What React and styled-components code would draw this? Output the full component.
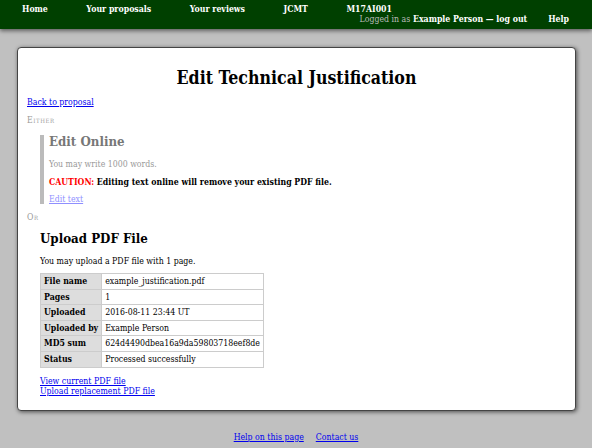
import styled, { createGlobalStyle } from "styled-components";

const GlobalStyle = createGlobalStyle`
  html, body {
    margin: 0;
    padding: 0;
    background: #c0c0c0;
    font-family: "DejaVu Serif Condensed", "DejaVu Serif", serif;
    font-stretch: condensed;
    font-size: 8.7px;
    line-height: 10px;
  }
`;

const Header = styled.div`
  background-color: #004000;
  height: 29px;
  box-shadow: 0 2px 4px rgba(0, 0, 0, 0.5);
  color: white;
  font-weight: bold;
  padding: 5px 23px 0 22px;
  box-sizing: border-box;
`;

const NavRow = styled.div`
  display: flex;
  justify-content: ${(props) => (props.right ? "flex-end" : "flex-start")};
  gap: ${(props) => (props.right ? "21px" : "38.5px")};
  line-height: ${(props) => (props.right ? "10px" : "9px")};
`;

const NavItem = styled.span`
  color: white;
`;

const Muted = styled.span`
  color: #bbbbbb;
  font-weight: normal;
`;

const Card = styled.div`
  background: white;
  margin: 18px 16px 0 17px;
  border: 1px solid #444;
  border-radius: 4px;
  box-shadow: 1px 1px 4px rgba(0, 0, 0, 0.6);
  padding: 20px 9px 14px 9px;
`;

const Title = styled.h1`
  text-align: center;
  font-size: 17.6px;
  line-height: 19px;
  margin: 0 0 10px 0;
`;

const Link = styled.a`
  color: ${(props) => (props.faded ? "#8f8fff" : "#0000ee")};
  text-decoration: underline;
  display: block;
  width: fit-content;
`;

const Choice = styled.div`
  font-variant: small-caps;
  letter-spacing: 0.6px;
  color: #999999;
  margin: 8px 0 10px 0;
`;

const Section = styled.div`
  margin-left: 13px;
  border-left: ${(props) => (props.faded ? "4px solid #bbb" : "none")};
  padding-left: ${(props) => (props.faded ? "5px" : "0")};
  color: ${(props) => (props.faded ? "#999" : "black")};
`;

const SectionTitle = styled.h2`
  font-size: 13.2px;
  line-height: 14px;
  margin: 0 0 10px 0;
  color: ${(props) => (props.faded ? "#777" : "black")};
`;

const Para = styled.p`
  margin: 0 0 ${(props) => props.gap || 8}px 0;
`;

const Caution = styled.p`
  margin: 0 0 7px 0;
  font-weight: bold;
  color: black;
`;

const Red = styled.span`
  color: #ff0000;
`;

const Table = styled.table`
  border-collapse: collapse;
  margin: 0 0 8px 0;
`;

const Th = styled.th`
  background: #dddddd;
  border: 1px solid #cccccc;
  text-align: left;
  padding: 2px 3px;
  line-height: 10.6px;
`;

const Td = styled.td`
  border: 1px solid #cccccc;
  padding: 2px 3px;
  line-height: 10.6px;
`;

const Footer = styled.div`
  display: flex;
  justify-content: center;
  gap: 12px;
  margin-top: 21px;
`;

const rows = [
  ["File name", "example_justification.pdf"],
  ["Pages", "1"],
  ["Uploaded", "2016-08-11 23:44 UT"],
  ["Uploaded by", "Example Person"],
  ["MD5 sum", "624d4490dbea16a9da59803718eef8de"],
  ["Status", "Processed successfully"],
];

export default function App() {
  return (
    <>
      <GlobalStyle />
      <Header>
        <NavRow>
          <NavItem>Home</NavItem>
          <NavItem>Your proposals</NavItem>
          <NavItem>Your reviews</NavItem>
          <NavItem>JCMT</NavItem>
          <NavItem>M17AI001</NavItem>
        </NavRow>
        <NavRow right>
          <NavItem>
            <Muted>Logged in as</Muted> Example Person — log out
          </NavItem>
          <NavItem>Help</NavItem>
        </NavRow>
      </Header>
      <Card>
        <Title>Edit Technical Justification</Title>
        <Link href="#">Back to proposal</Link>
        <Choice>Either</Choice>
        <Section faded>
          <SectionTitle faded>Edit Online</SectionTitle>
          <Para>You may write 1000 words.</Para>
          <Caution>
            <Red>CAUTION:</Red> Editing text online will remove your existing PDF file.
          </Caution>
          <Link href="#" faded>Edit text</Link>
        </Section>
        <Choice>Or</Choice>
        <Section>
          <SectionTitle>Upload PDF File</SectionTitle>
          <Para gap={7}>You may upload a PDF file with 1 page.</Para>
          <Table>
            <tbody>
              {rows.map(([k, v]) => (
                <tr key={k}>
                  <Th>{k}</Th>
                  <Td>{v}</Td>
                </tr>
              ))}
            </tbody>
          </Table>
          <Link href="#">View current PDF file</Link>
          <Link href="#">Upload replacement PDF file</Link>
        </Section>
      </Card>
      <Footer>
        <Link href="#">Help on this page</Link>
        <Link href="#">Contact us</Link>
      </Footer>
    </>
  );
}
